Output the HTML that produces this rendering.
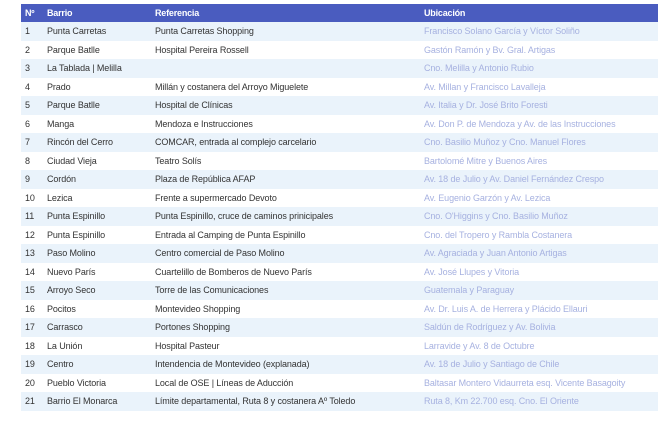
<!DOCTYPE html>
<html><head><meta charset="utf-8"><style>
html,body{margin:0;padding:0;background:#fff;width:658px;height:425px;overflow:hidden}
table{position:absolute;left:21px;top:4px;width:637px;border-collapse:collapse;font-family:"Liberation Sans",sans-serif;font-size:9px;color:#333}
th{background:#4a5cbf;color:#fff;text-align:left;font-weight:bold;height:18px;padding:0;letter-spacing:-0.2px}
td{height:18.5px;padding:0;white-space:nowrap;letter-spacing:-0.1px}
tbody tr:nth-child(odd) td{background:#eaf3fb}
td:first-child,th:first-child{padding-left:4px;width:22px}
.c2{width:108px}.c3{width:269px}
td:last-child{color:#a6b1e0}
</style></head><body>
<table><thead><tr><th>Nº</th><th class="c2">Barrio</th><th class="c3">Referencia</th><th>Ubicación</th></tr></thead>
<tbody>
<tr><td>1</td><td>Punta Carretas</td><td>Punta Carretas Shopping</td><td>Francisco Solano García y Víctor Soliño</td></tr>
<tr><td>2</td><td>Parque Batlle</td><td>Hospital Pereira Rossell</td><td>Gastón Ramón y Bv. Gral. Artigas</td></tr>
<tr><td>3</td><td>La Tablada | Melilla</td><td></td><td>Cno. Melilla y Antonio Rubio</td></tr>
<tr><td>4</td><td>Prado</td><td>Millán y costanera del Arroyo Miguelete</td><td>Av. Millan y Francisco Lavalleja</td></tr>
<tr><td>5</td><td>Parque Batlle</td><td>Hospital de Clínicas</td><td>Av. Italia y Dr. José Brito Foresti</td></tr>
<tr><td>6</td><td>Manga</td><td>Mendoza e Instrucciones</td><td>Av. Don P. de Mendoza y Av. de las Instrucciones</td></tr>
<tr><td>7</td><td>Rincón del Cerro</td><td>COMCAR, entrada al complejo carcelario</td><td>Cno. Basilio Muñoz y Cno. Manuel Flores</td></tr>
<tr><td>8</td><td>Ciudad Vieja</td><td>Teatro Solís</td><td>Bartolomé Mitre y Buenos Aires</td></tr>
<tr><td>9</td><td>Cordón</td><td>Plaza de República AFAP</td><td>Av. 18 de Julio y Av. Daniel Fernández Crespo</td></tr>
<tr><td>10</td><td>Lezica</td><td>Frente a supermercado Devoto</td><td>Av. Eugenio Garzón y Av. Lezica</td></tr>
<tr><td>11</td><td>Punta Espinillo</td><td>Punta Espinillo, cruce de caminos prinicipales</td><td>Cno. O'Higgins y Cno. Basilio Muñoz</td></tr>
<tr><td>12</td><td>Punta Espinillo</td><td>Entrada al Camping de Punta Espinillo</td><td>Cno. del Tropero y Rambla Costanera</td></tr>
<tr><td>13</td><td>Paso Molino</td><td>Centro comercial de Paso Molino</td><td>Av. Agraciada y Juan Antonio Artigas</td></tr>
<tr><td>14</td><td>Nuevo París</td><td>Cuartelillo de Bomberos de Nuevo París</td><td>Av. José Llupes y Vitoria</td></tr>
<tr><td>15</td><td>Arroyo Seco</td><td>Torre de las Comunicaciones</td><td>Guatemala y Paraguay</td></tr>
<tr><td>16</td><td>Pocitos</td><td>Montevideo Shopping</td><td>Av. Dr. Luis A. de Herrera y Plácido Ellauri</td></tr>
<tr><td>17</td><td>Carrasco</td><td>Portones Shopping</td><td>Saldún de Rodríguez y Av. Bolivia</td></tr>
<tr><td>18</td><td>La Unión</td><td>Hospital Pasteur</td><td>Larravide y Av. 8 de Octubre</td></tr>
<tr><td>19</td><td>Centro</td><td>Intendencia de Montevideo (explanada)</td><td>Av. 18 de Julio y Santiago de Chile</td></tr>
<tr><td>20</td><td>Pueblo Victoria</td><td>Local de OSE | Líneas de Aducción</td><td>Baltasar Montero Vidaurreta esq. Vicente Basagoity</td></tr>
<tr><td>21</td><td>Barrio El Monarca</td><td>Límite departamental, Ruta 8 y costanera Aº Toledo</td><td>Ruta 8, Km 22.700 esq. Cno. El Oriente</td></tr>
</tbody></table>
</body></html>
